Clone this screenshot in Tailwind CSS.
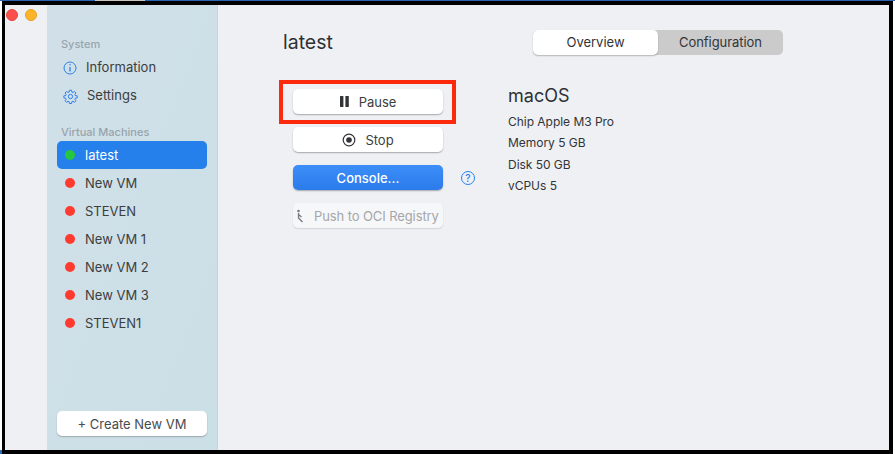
<!DOCTYPE html>
<html>
<head>
<meta charset="utf-8">
<script src="https://cdn.jsdelivr.net/npm/@tailwindcss/browser@4"></script>
</head>
<body class="m-0 overflow-hidden bg-white">
<div class="relative w-[895px] h-[454px] font-['Inter','Liberation_Sans',sans-serif] text-[#3c3d40] antialiased">
  <div class="h-px bg-[#2c62b4] flex">
    <span class="ml-[95px] w-[50px] h-px bg-[#c9c6bd]"></span>
  </div>
  <span class="absolute left-0 bottom-0 w-[2px] h-[4px] bg-[#2c6fb8]"></span>
  <div class="relative ml-[2px] w-[891px] h-[453px] border-black border-solid border-l-[3px] border-r-[4px] border-t-[4px] border-b-[4px] bg-[#eef0f4] flex overflow-hidden">
    <!-- traffic lights -->
    <span class="absolute left-[1px] top-[4px] w-3 h-3 rounded-full bg-[#fb4f4b] border border-[#e5443f]"></span>
    <span class="absolute left-[20px] top-[4px] w-3 h-3 rounded-full bg-[#fdb42a] border border-[#e6a020]"></span>

    <!-- sidebar -->
    <aside class="ml-[42px] w-[171px] shrink-0 h-full bg-gradient-to-br from-[#d1e0e8] to-[#cbdfe6] border-r border-[#c5d3da] flex flex-col pl-[10px] pr-[10px] pt-[33px] pb-[14px]">
      <div class="pl-1 text-[11px] leading-[12px] font-medium text-[#98a4ac]">System</div>
      <nav class="mt-[4px] flex flex-col">
        <div class="h-7 flex items-center gap-[9px] pl-[6px] text-[13px]">
          <svg class="w-[14px] h-[14px]" viewBox="0 0 14 14" fill="none" stroke="#2b7ff0" stroke-width="1"><circle cx="7" cy="7" r="6"/><circle cx="7" cy="3.8" r=".7" fill="#2b7ff0" stroke="none"/><path d="M7 6v4.6" stroke-width="1.3"/></svg>
          <span>Information</span>
        </div>
        <div class="h-7 flex items-center gap-[9px] pl-[6px] text-[13px]">
          <svg class="w-[15px] h-[15px]" viewBox="0 0 24 24" fill="none" stroke="#2b7ff0" stroke-width="1.6" stroke-linejoin="round"><path d="M10.3 2h3.4l.5 2.9 1.7.7 2.4-1.7 2.4 2.4-1.7 2.4.7 1.7 2.9.5v3.4l-2.9.5-.7 1.7 1.7 2.4-2.4 2.4-2.4-1.7-1.7.7-.5 2.9h-3.4l-.5-2.9-1.7-.7-2.4 1.7-2.4-2.4 1.7-2.4-.7-1.7-2.9-.5v-3.4l2.9-.5.7-1.7-1.7-2.4 2.4-2.4 2.4 1.7 1.7-.7z"/><circle cx="12" cy="12" r="3.4"/></svg>
          <span>Settings</span>
        </div>
      </nav>
      <div class="mt-[16px] pl-1 text-[11px] leading-[12px] font-medium text-[#98a4ac]">Virtual Machines</div>
      <div class="mt-[3px] flex flex-col text-[13px]">
        <div class="h-7 flex items-center gap-[10px] pl-2 rounded-[5px] bg-[#2580ec] text-white"><span class="w-[10px] h-[10px] rounded-full bg-[#25c640]"></span><span class="pt-[2px]">latest</span></div>
        <div class="h-7 flex items-center gap-[10px] pl-2"><span class="w-[10px] h-[10px] rounded-full bg-[#ff3b30]"></span><span class="pt-[2px]">New VM</span></div>
        <div class="h-7 flex items-center gap-[10px] pl-2"><span class="w-[10px] h-[10px] rounded-full bg-[#ff3b30]"></span><span class="pt-[2px]">STEVEN</span></div>
        <div class="h-7 flex items-center gap-[10px] pl-2"><span class="w-[10px] h-[10px] rounded-full bg-[#ff3b30]"></span><span class="pt-[2px]">New VM 1</span></div>
        <div class="h-7 flex items-center gap-[10px] pl-2"><span class="w-[10px] h-[10px] rounded-full bg-[#ff3b30]"></span><span class="pt-[2px]">New VM 2</span></div>
        <div class="h-7 flex items-center gap-[10px] pl-2"><span class="w-[10px] h-[10px] rounded-full bg-[#ff3b30]"></span><span class="pt-[2px]">New VM 3</span></div>
        <div class="h-7 flex items-center gap-[10px] pl-2"><span class="w-[10px] h-[10px] rounded-full bg-[#ff3b30]"></span><span class="pt-[2px]">STEVEN1</span></div>
      </div>
      <button class="mt-auto h-[25px] pt-[2px] rounded-[5px] bg-white text-[13px] text-[#4a4b4e] shadow-[0_1px_1.5px_rgba(0,0,0,0.25)]">+ Create New VM</button>
    </aside>

    <!-- main -->
    <main class="flex-1 pl-[65px] pt-[25px]">
      <header class="flex items-center w-[500px] h-[25px]">
        <h1 class="text-[19.5px] font-normal leading-[25px] text-[#2f3033] w-[250px]">latest</h1>
        <div class="-mt-[1px] flex w-[250px] h-[25px] rounded-[5px] bg-[#cbcbcb] text-[13px] text-[#333437]">
          <div class="w-[125px] pt-[2px] rounded-[5px] bg-white flex items-center justify-center shadow-[0_1px_1.5px_rgba(0,0,0,0.25)]">Overview</div>
          <div class="flex-1 pt-[2px] flex items-center justify-center tracking-[-0.05px]">Configuration</div>
        </div>
      </header>
      <div class="mt-[34px] flex">
        <div class="ml-[10px] w-[150px] flex flex-col gap-[13px] text-[13px]">
          <button class="h-[25px] rounded-[5px] bg-white shadow-[0_1px_1.5px_rgba(0,0,0,0.3)] flex items-center justify-center gap-[10px]">
            <svg class="w-[9px] h-[11px]" viewBox="0 0 9 11" fill="#333437"><rect x="0" width="3.4" height="11" rx=".5"/><rect x="5.4" width="3.4" height="11" rx=".5"/></svg>
            <span class="pt-[2px]">Pause</span>
          </button>
          <button class="h-[25px] rounded-[5px] bg-white shadow-[0_1px_1.5px_rgba(0,0,0,0.3)] flex items-center justify-center gap-[9px]">
            <svg class="w-[14px] h-[14px]" viewBox="0 0 14 14"><circle cx="7" cy="7" r="5.8" fill="none" stroke="#333437" stroke-width="1.2"/><circle cx="7" cy="7" r="2.8" fill="#333437"/></svg>
            <span class="pt-[2px]">Stop</span>
          </button>
          <button class="h-[25px] pt-[2px] rounded-[5px] bg-gradient-to-b from-[#3c8ef8] to-[#2b7bec] text-white font-medium shadow-[0_1px_1.5px_rgba(0,0,0,0.3)]">Console...</button>
          <button class="h-[25px] rounded-[5px] bg-[#f6f7f9] text-[#a5a6a9] shadow-[0_1px_1.5px_rgba(0,0,0,0.12)] flex items-center pl-[3px] gap-[10px]">
            <svg class="w-[8px] h-[14px]" viewBox="0 0 8 14" fill="none" stroke="#77787a" stroke-width="1.3"><circle cx="2.5" cy="2" r="1.3" fill="#77787a" stroke="none"/><path d="M2.5 4v5.5M2.5 5.5l3 2.5M2.5 9l4 4"/></svg>
            <span class="pt-[2px] whitespace-nowrap tracking-[-0.1px]">Push to OCI Registry</span>
          </button>
        </div>
        <div class="ml-[18px] mt-[76px] h-[25px] flex items-center w-[47px] self-start">
          <span class="w-[14px] h-[14px] rounded-full border border-[#2b7ff0] text-[#2b7ff0] text-[10px] leading-none font-medium flex items-center justify-center">?</span>
        </div>
        <section class="-mt-[4px] text-[12px] text-[#333437]">
          <h2 class="text-[18px] font-normal leading-[22px] text-[#2f3033]">macOS</h2>
          <div class="mt-[4px] flex flex-col tracking-[-0.03px]">
            <div class="leading-[21.4px]">Chip Apple M3 Pro</div>
            <div class="leading-[21.4px]">Memory 5 GB</div>
            <div class="leading-[21.4px]">Disk 50 GB</div>
            <div class="leading-[21.4px]">vCPUs 5</div>
          </div>
        </section>
      </div>
    </main>

    <!-- annotation -->
    <div class="absolute left-[274px] top-[75px] w-[177px] h-[44px] border-[4px] border-[#fb2a0c] pointer-events-none"></div>
  </div>
</div>
</body>
</html>
